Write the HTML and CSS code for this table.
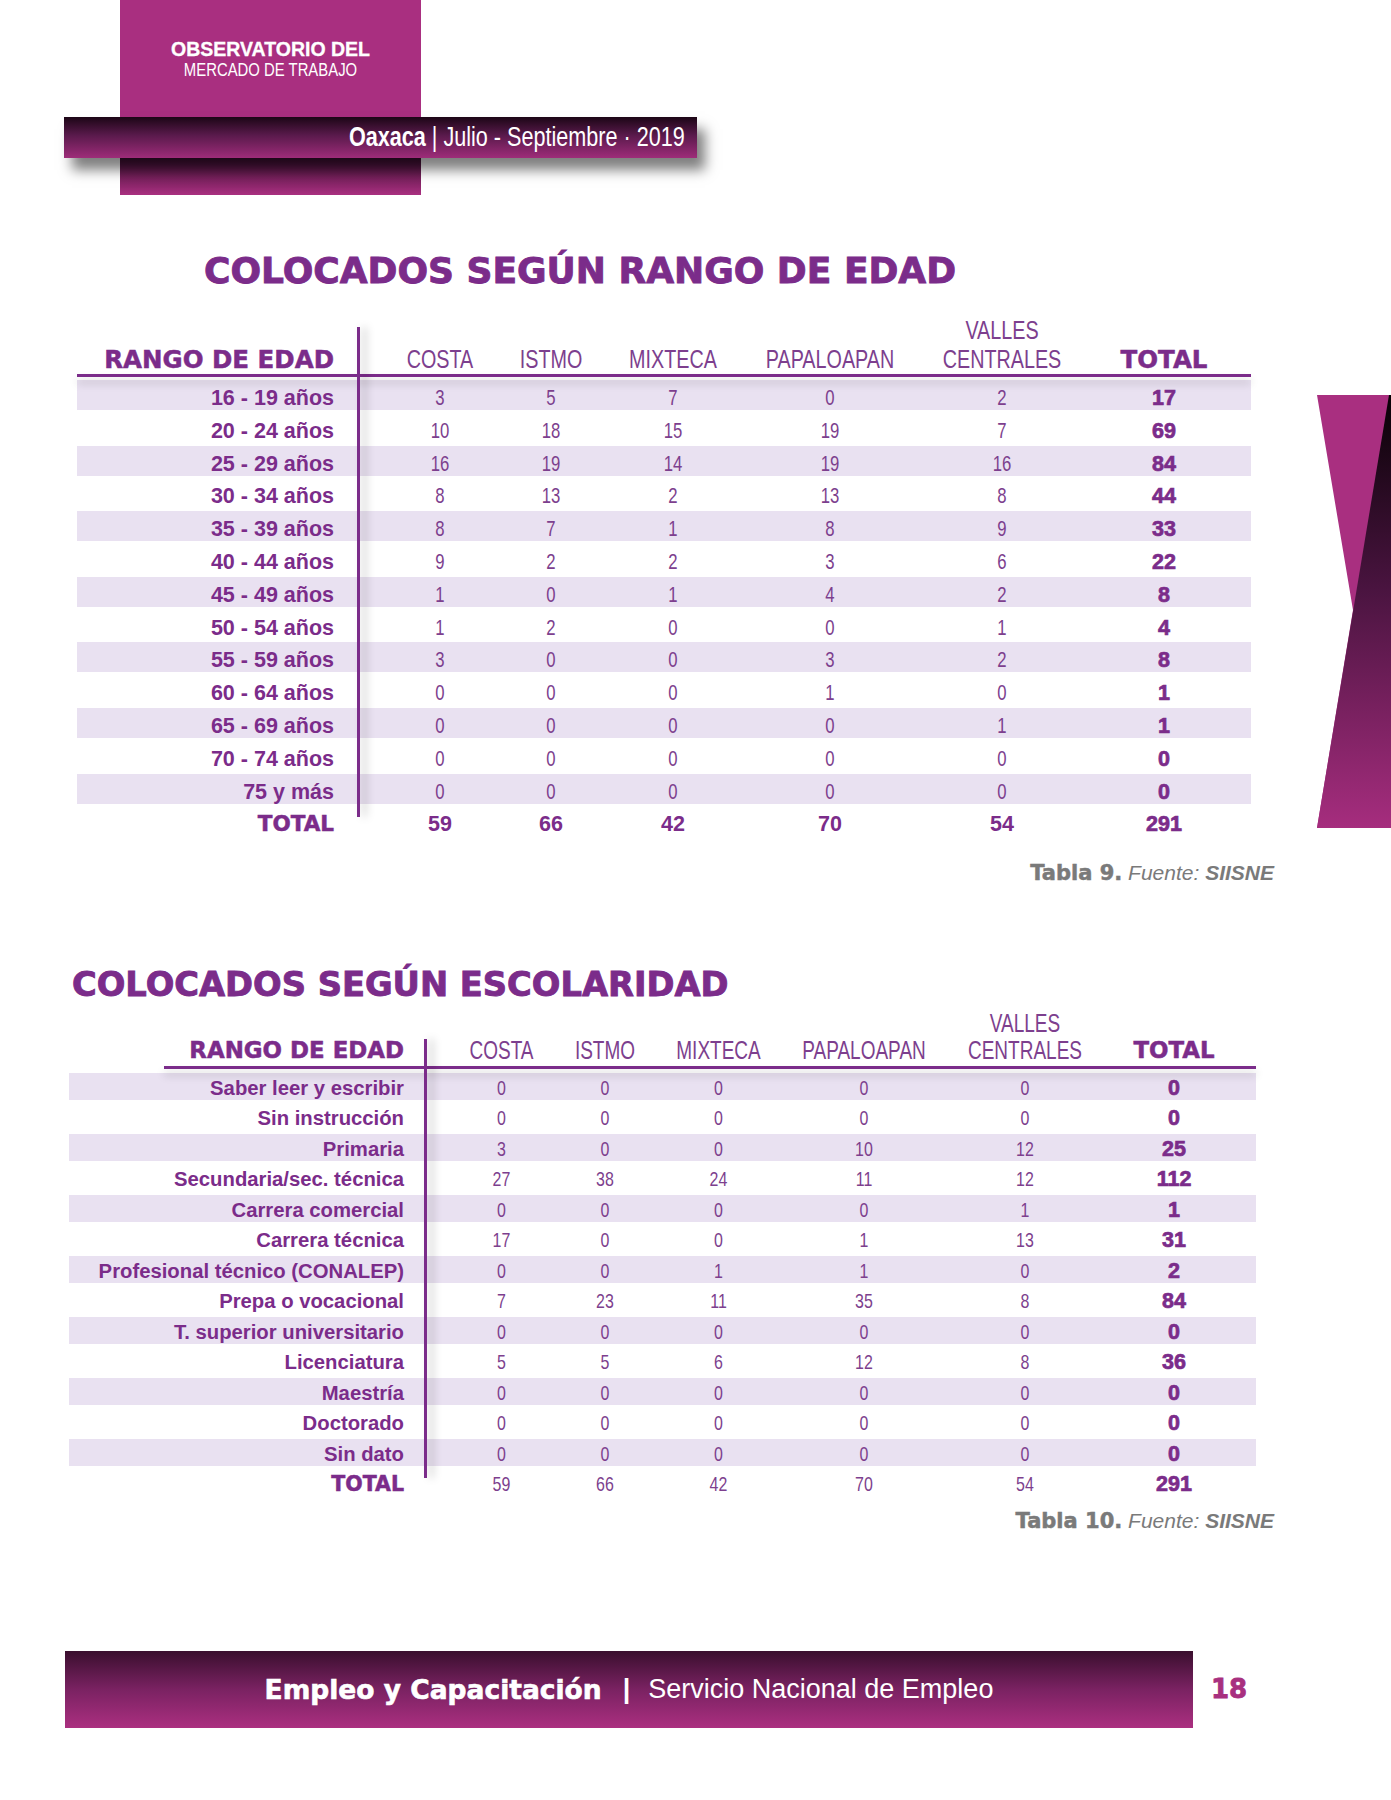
FILE: index.html
```html
<!DOCTYPE html>
<html lang="es">
<head>
<meta charset="utf-8">
<title>Colocados - Oaxaca</title>
<link rel="stylesheet" href="styles.css">
</head>
<body>
<header class="top">
  <div class="brand">
    <div class="brand-1">OBSERVATORIO DEL</div>
    <div class="brand-2">MERCADO DE TRABAJO</div>
  </div>
  <div class="period-bar"><span class="period-text"><b>Oaxaca</b> | Julio - Septiembre · 2019</span></div>
</header>

<svg class="deco" viewBox="0 0 75 435" aria-hidden="true">
  <defs>
    <linearGradient id="dk" x1="0" y1="0" x2="0" y2="1">
      <stop offset="0" stop-color="#080105"/>
      <stop offset="0.45" stop-color="#4a1440"/>
      <stop offset="1" stop-color="#a62d7e"/>
    </linearGradient>
  </defs>
  <polygon points="1,1 75,1 75,434 1,434 37,216" fill="#a92f80"/>
  <polygon points="73,1 75,1 75,434 1,434" fill="url(#dk)"/>
</svg>

<h2 class="title title-1">COLOCADOS SEGÚN RANGO DE EDAD</h2>

<section class="table t1">
  <div class="row head">
    <span class="hlab">RANGO DE EDAD</span><span class="sp"></span>
    <span class="hc">COSTA</span><span class="hc">ISTMO</span><span class="hc">MIXTECA</span><span class="hc">PAPALOAPAN</span><span class="hc">VALLES<br>CENTRALES</span><span class="htot">TOTAL</span>
  </div>
  <div class="hline"></div>
  <div class="rows">
    <div class="row stripe"><span class="lbl">16 - 19 años</span><span class="sp"></span><span class="n">3</span><span class="n">5</span><span class="n">7</span><span class="n">0</span><span class="n">2</span><span class="tot">17</span></div>
    <div class="row"><span class="lbl">20 - 24 años</span><span class="sp"></span><span class="n">10</span><span class="n">18</span><span class="n">15</span><span class="n">19</span><span class="n">7</span><span class="tot">69</span></div>
    <div class="row stripe"><span class="lbl">25 - 29 años</span><span class="sp"></span><span class="n">16</span><span class="n">19</span><span class="n">14</span><span class="n">19</span><span class="n">16</span><span class="tot">84</span></div>
    <div class="row"><span class="lbl">30 - 34 años</span><span class="sp"></span><span class="n">8</span><span class="n">13</span><span class="n">2</span><span class="n">13</span><span class="n">8</span><span class="tot">44</span></div>
    <div class="row stripe"><span class="lbl">35 - 39 años</span><span class="sp"></span><span class="n">8</span><span class="n">7</span><span class="n">1</span><span class="n">8</span><span class="n">9</span><span class="tot">33</span></div>
    <div class="row"><span class="lbl">40 - 44 años</span><span class="sp"></span><span class="n">9</span><span class="n">2</span><span class="n">2</span><span class="n">3</span><span class="n">6</span><span class="tot">22</span></div>
    <div class="row stripe"><span class="lbl">45 - 49 años</span><span class="sp"></span><span class="n">1</span><span class="n">0</span><span class="n">1</span><span class="n">4</span><span class="n">2</span><span class="tot">8</span></div>
    <div class="row"><span class="lbl">50 - 54 años</span><span class="sp"></span><span class="n">1</span><span class="n">2</span><span class="n">0</span><span class="n">0</span><span class="n">1</span><span class="tot">4</span></div>
    <div class="row stripe"><span class="lbl">55 - 59 años</span><span class="sp"></span><span class="n">3</span><span class="n">0</span><span class="n">0</span><span class="n">3</span><span class="n">2</span><span class="tot">8</span></div>
    <div class="row"><span class="lbl">60 - 64 años</span><span class="sp"></span><span class="n">0</span><span class="n">0</span><span class="n">0</span><span class="n">1</span><span class="n">0</span><span class="tot">1</span></div>
    <div class="row stripe"><span class="lbl">65 - 69 años</span><span class="sp"></span><span class="n">0</span><span class="n">0</span><span class="n">0</span><span class="n">0</span><span class="n">1</span><span class="tot">1</span></div>
    <div class="row"><span class="lbl">70 - 74 años</span><span class="sp"></span><span class="n">0</span><span class="n">0</span><span class="n">0</span><span class="n">0</span><span class="n">0</span><span class="tot">0</span></div>
    <div class="row stripe"><span class="lbl">75 y más</span><span class="sp"></span><span class="n">0</span><span class="n">0</span><span class="n">0</span><span class="n">0</span><span class="n">0</span><span class="tot">0</span></div>
    <div class="row total-row"><span class="tlabel">TOTAL</span><span class="sp"></span><span class="nb">59</span><span class="nb">66</span><span class="nb">42</span><span class="nb">70</span><span class="nb">54</span><span class="tot">291</span></div>
  </div>
  <div class="vline"></div>
</section>
<p class="caption"><b>Tabla 9.</b> <i>Fuente: <b>SIISNE</b></i></p>

<h2 class="title title-2">COLOCADOS SEGÚN ESCOLARIDAD</h2>

<section class="table t2">
  <div class="row head">
    <span class="hlab">RANGO DE EDAD</span><span class="sp"></span>
    <span class="hc">COSTA</span><span class="hc">ISTMO</span><span class="hc">MIXTECA</span><span class="hc">PAPALOAPAN</span><span class="hc">VALLES<br>CENTRALES</span><span class="htot">TOTAL</span>
  </div>
  <div class="hline"></div>
  <div class="rows">
    <div class="row stripe"><span class="lbl">Saber leer y escribir</span><span class="sp"></span><span class="n">0</span><span class="n">0</span><span class="n">0</span><span class="n">0</span><span class="n">0</span><span class="tot">0</span></div>
    <div class="row"><span class="lbl">Sin instrucción</span><span class="sp"></span><span class="n">0</span><span class="n">0</span><span class="n">0</span><span class="n">0</span><span class="n">0</span><span class="tot">0</span></div>
    <div class="row stripe"><span class="lbl">Primaria</span><span class="sp"></span><span class="n">3</span><span class="n">0</span><span class="n">0</span><span class="n">10</span><span class="n">12</span><span class="tot">25</span></div>
    <div class="row"><span class="lbl">Secundaria/sec. técnica</span><span class="sp"></span><span class="n">27</span><span class="n">38</span><span class="n">24</span><span class="n">11</span><span class="n">12</span><span class="tot">112</span></div>
    <div class="row stripe"><span class="lbl">Carrera comercial</span><span class="sp"></span><span class="n">0</span><span class="n">0</span><span class="n">0</span><span class="n">0</span><span class="n">1</span><span class="tot">1</span></div>
    <div class="row"><span class="lbl">Carrera técnica</span><span class="sp"></span><span class="n">17</span><span class="n">0</span><span class="n">0</span><span class="n">1</span><span class="n">13</span><span class="tot">31</span></div>
    <div class="row stripe"><span class="lbl">Profesional técnico (CONALEP)</span><span class="sp"></span><span class="n">0</span><span class="n">0</span><span class="n">1</span><span class="n">1</span><span class="n">0</span><span class="tot">2</span></div>
    <div class="row"><span class="lbl">Prepa o vocacional</span><span class="sp"></span><span class="n">7</span><span class="n">23</span><span class="n">11</span><span class="n">35</span><span class="n">8</span><span class="tot">84</span></div>
    <div class="row stripe"><span class="lbl">T. superior universitario</span><span class="sp"></span><span class="n">0</span><span class="n">0</span><span class="n">0</span><span class="n">0</span><span class="n">0</span><span class="tot">0</span></div>
    <div class="row"><span class="lbl">Licenciatura</span><span class="sp"></span><span class="n">5</span><span class="n">5</span><span class="n">6</span><span class="n">12</span><span class="n">8</span><span class="tot">36</span></div>
    <div class="row stripe"><span class="lbl">Maestría</span><span class="sp"></span><span class="n">0</span><span class="n">0</span><span class="n">0</span><span class="n">0</span><span class="n">0</span><span class="tot">0</span></div>
    <div class="row"><span class="lbl">Doctorado</span><span class="sp"></span><span class="n">0</span><span class="n">0</span><span class="n">0</span><span class="n">0</span><span class="n">0</span><span class="tot">0</span></div>
    <div class="row stripe"><span class="lbl">Sin dato</span><span class="sp"></span><span class="n">0</span><span class="n">0</span><span class="n">0</span><span class="n">0</span><span class="n">0</span><span class="tot">0</span></div>
    <div class="row total-row"><span class="tlabel">TOTAL</span><span class="sp"></span><span class="n">59</span><span class="n">66</span><span class="n">42</span><span class="n">70</span><span class="n">54</span><span class="tot">291</span></div>
  </div>
  <div class="vline"></div>
</section>
<p class="caption"><b>Tabla 10.</b> <i>Fuente: <b>SIISNE</b></i></p>

<footer class="footer">
  <div class="foot-bar">
    <span class="foot-strong">Empleo y Capacitación</span><span class="foot-pipe">|</span><span class="foot-light">Servicio Nacional de Empleo</span>
  </div>
  <span class="page-num">18</span>
</footer>
</body>
</html>
```

FILE: styles.css
```css
body {
  margin: 0;
  width: 1391px;
  height: 1800px;
  position: relative;
  overflow: hidden;
  background: #ffffff;
  font-family: "Liberation Sans", Arial, sans-serif;
  color: #7b2c8a;
}

.top {
  position: relative;
  height: 195px;
}

.brand {
  margin-left: 120px;
  width: 301px;
  height: 195px;
  box-sizing: border-box;
  padding-top: 38px;
  text-align: center;
  color: #ffffff;
  background: linear-gradient(to bottom, #a92f80 0, #a92f80 158px, #3c0f31 158px, #a92f80 195px);
}

.brand-1 {
  font-weight: 700;
  font-size: 19.5px;
  line-height: 22px;
  -webkit-text-stroke: 0.3px #ffffff;
}

.brand-2 {
  font-size: 17.5px;
  line-height: 20px;
  transform: scaleX(0.85);
}

.period-bar {
  position: absolute;
  left: 64px;
  top: 117px;
  width: 633px;
  height: 41px;
  box-sizing: border-box;
  padding-right: 12px;
  text-align: right;
  color: #ffffff;
  font-size: 27px;
  line-height: 41px;
  white-space: nowrap;
  background: linear-gradient(to bottom, #1c0616 0%, #5a1a4c 45%, #9e2c79 100%);
  box-shadow: 8px 12px 12px rgba(0, 0, 0, 0.5);
}

.period-text {
  display: inline-block;
  transform: scaleX(0.8);
  transform-origin: right center;
}

.deco {
  position: absolute;
  left: 1316px;
  top: 394px;
  width: 75px;
  height: 435px;
}

.title {
  margin: 0;
  font-family: "DejaVu Sans", sans-serif;
  font-weight: 700;
  line-height: 40px;
  color: #7b2c8a;
  white-space: nowrap;
  -webkit-text-stroke: 0.9px #7b2c8a;
}

.title-1 {
  font-size: 36px;
  margin-left: 204px;
  margin-top: 56px;
}

.title-2 {
  font-size: 33.7px;
  margin-left: 72px;
  margin-top: 79px;
}

.table {
  position: relative;
}

.t1 {
  margin-left: 77px;
  width: 1174px;
  margin-top: 24.5px;
}

.t2 {
  margin-left: 69px;
  width: 1187px;
  margin-top: 5.5px;
}

.row {
  display: grid;
  white-space: nowrap;
}

.t1 .row {
  grid-template-columns: 257px 26px 160px 62px 182px 132px 212px 112px 31px;
}

.t2 .row {
  grid-template-columns: 335px 23px 149px 58px 169px 122px 200px 98px 33px;
}

.head {
  align-items: end;
}

.t1 .head {
  line-height: 29px;
}

.t2 .head {
  line-height: 27px;
}

.hlab,
.htot {
  font-family: "DejaVu Sans", sans-serif;
  font-weight: 700;
  color: #7b2c8a;
  -webkit-text-stroke: 0.5px #7b2c8a;
}

.hlab {
  text-align: right;
}

.htot {
  text-align: center;
}

.t1 .hlab,
.t1 .htot {
  font-size: 24.5px;
}

.t2 .hlab,
.t2 .htot {
  font-size: 22.9px;
}

.hc {
  display: flex;
  justify-content: center;
  text-align: center;
  color: #7d3f8e;
  transform: scaleX(0.76);
}

.t1 .hc {
  font-size: 26px;
}

.t2 .hc {
  font-size: 25px;
}

.hline {
  height: 3px;
  background: #7b2c8a;
  box-shadow: 0 6px 8px rgba(0, 0, 0, 0.22);
  position: relative;
  z-index: 1;
}

.t2 .hline {
  margin-left: 95px;
  margin-top: 1.5px;
}

.rows {
  display: grid;
}

.t1 .rows {
  margin-top: 3.5px;
  grid-auto-rows: 30px;
  row-gap: 2.8px;
}

.t2 .rows {
  margin-top: 4px;
  grid-auto-rows: 27px;
  row-gap: 3.5px;
}

.t1 .row:not(.head) {
  line-height: 36px;
}

.t2 .row:not(.head) {
  line-height: 30px;
}

.stripe {
  background: #e9e1f1;
}

.lbl,
.tlabel {
  text-align: right;
  font-weight: 700;
  color: #7b2c8a;
}

.t1 .lbl {
  font-size: 21.5px;
}

.t2 .lbl {
  font-size: 20.3px;
}

.tlabel {
  font-family: "DejaVu Sans", sans-serif;
  -webkit-text-stroke: 0.5px #7b2c8a;
}

.t1 .tlabel {
  font-size: 21.5px;
}

.t2 .tlabel {
  font-size: 20.5px;
}

.n,
.nb,
.tot {
  text-align: center;
}

.n {
  display: flex;
  justify-content: center;
  color: #7d3f8e;
  transform: scaleX(0.76);
}

.t1 .n {
  font-size: 22px;
}

.t2 .n {
  font-size: 21px;
}

.nb {
  font-weight: 700;
  font-size: 21.5px;
  color: #7b2c8a;
}

.tot {
  font-weight: 700;
  color: #7b2c8a;
  -webkit-text-stroke: 0.7px #7b2c8a;
  font-size: 21.5px;
}

.vline {
  position: absolute;
  width: 3px;
  background: #7b2c8a;
  box-shadow: 6px 0 8px rgba(0, 0, 0, 0.25);
  z-index: 2;
}

.t1 .vline {
  left: 280px;
  top: 11.5px;
  height: 490px;
}

.t2 .vline {
  left: 355px;
  top: 28.5px;
  height: 439px;
}

.caption {
  margin: 0;
  width: 1274px;
  text-align: right;
  font-size: 21px;
  line-height: 26px;
  color: #7a7a7a;
  white-space: nowrap;
}

.t1 + .caption {
  margin-top: 23.6px;
}

.t2 + .caption {
  margin-top: 11.5px;
}

.caption > b {
  font-family: "DejaVu Sans", sans-serif;
  font-weight: 700;
  -webkit-text-stroke: 0.5px #7a7a7a;
}

.caption i {
  font-style: italic;
}

.caption i b {
  font-weight: 700;
}

.footer {
  display: flex;
  align-items: center;
  margin-top: 117px;
}

.foot-bar {
  margin-left: 65px;
  width: 1128px;
  height: 77px;
  display: flex;
  align-items: center;
  justify-content: center;
  color: #ffffff;
  background: linear-gradient(to bottom, #3a0f2e 0%, #7a2262 50%, #ab2f80 100%);
  white-space: nowrap;
}

.foot-strong {
  font-family: "DejaVu Sans", sans-serif;
  font-weight: 700;
  font-size: 26.5px;
  -webkit-text-stroke: 0.6px #ffffff;
}

.foot-pipe {
  font-size: 27px;
  font-weight: 700;
  padding: 0 18px 0 21px;
}

.foot-light {
  font-size: 27px;
}

.page-num {
  margin-left: 18px;
  font-family: "DejaVu Sans", sans-serif;
  font-weight: 700;
  font-size: 26px;
  color: #a8307f;
  -webkit-text-stroke: 0.8px #a8307f;
}
```
